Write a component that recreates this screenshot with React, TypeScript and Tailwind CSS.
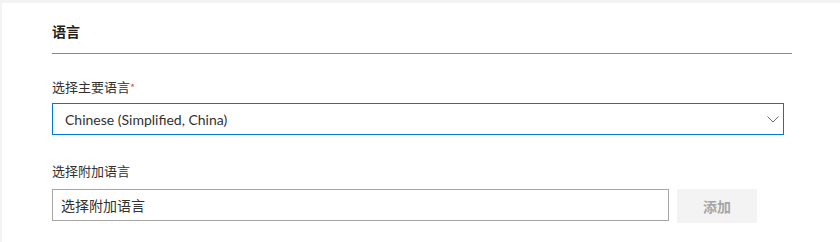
import { useState } from 'react';

const cjk = { fontFamily: '"Segoe UI", "Noto Sans CJK SC", sans-serif' };

function Chevron() {
    return (
        <svg width="12" height="7" viewBox="0 0 12 7" className="shrink-0">
            <polyline points="0.5,0.5 6,6 11.5,0.5" fill="none" stroke="#6b6b6b" strokeWidth="1" />
        </svg>
    );
}

export default function App() {
    const [extra, setExtra] = useState('');

    return (
        <div className="w-[840px] h-[242px] bg-[#f3f3f3] pt-[3px] pl-[2px] flex" style={cjk}>
            <div className="flex-1 bg-white pl-[50px] pr-[48px] pt-[18px] text-[#323130]">
                <h2 className="text-[14px] font-bold leading-[20px] text-[#201f1e] pb-[12px] border-b border-[#8a8a8a]">
                    语言
                </h2>

                <div className="mt-[23px] pr-[8px]">
                    <label className="block text-[13px] leading-[20px] mb-[6px]">
                        选择主要语言<span className="text-[#e35a5a] text-[11px] align-top">*</span>
                    </label>
                    <div className="h-[32px] border border-[#0078d4] flex items-center pl-[12px] pr-[4px]">
                        <span className="flex-1 text-[14px] text-[#323130]" style={{ fontFamily: 'Lato, "Noto Sans CJK SC", sans-serif' }}>
                            Chinese (Simplified, China)
                        </span>
                        <Chevron />
                    </div>
                </div>

                <div className="mt-[26px]">
                    <label className="block text-[13px] leading-[20px] mb-[8px]">选择附加语言</label>
                    <div className="flex gap-[8px] items-start">
                        <input
                            value={extra}
                            onChange={(e) => setExtra(e.target.value)}
                            placeholder="选择附加语言"
                            className="w-[617px] h-[32px] border border-[#a6a6a6] px-[8px] text-[14px] text-[#323130] placeholder:text-[#323130] outline-none"
                        />
                        <button className="w-[80px] h-[34px] bg-[#f3f3f3] text-[#a6a6a6] text-[14px] font-bold">
                            添加
                        </button>
                    </div>
                </div>
            </div>
        </div>
    );
}
